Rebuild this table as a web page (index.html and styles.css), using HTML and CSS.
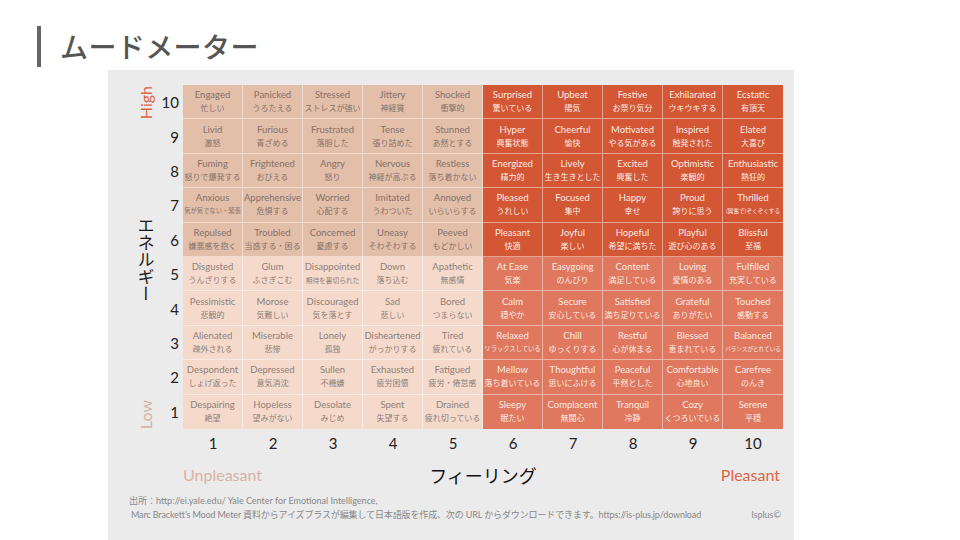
FILE: index.html
```html
<!DOCTYPE html>
<html lang="ja">
<head>
<meta charset="utf-8">
<title>ムードメーター</title>
<link rel="stylesheet" href="styles.css">
</head>
<body>
<header class="header">
  <div class="bar"></div>
  <h1 class="title">ムードメーター</h1>
</header>
<section class="panel">
  <div class="chart">
    <div class="axis-y">
      <span class="high">High</span>
      <span class="energy">エネルギー</span>
      <span class="low">Low</span>
    </div>

    <div class="rn">10</div>
    <div class="c q1"><span class="en">Engaged</span><span class="ja">忙しい</span></div>
    <div class="c q1"><span class="en">Panicked</span><span class="ja">うろたえる</span></div>
    <div class="c q1"><span class="en">Stressed</span><span class="ja">ストレスが強い</span></div>
    <div class="c q1"><span class="en">Jittery</span><span class="ja">神経質</span></div>
    <div class="c q1"><span class="en">Shocked</span><span class="ja">衝撃的</span></div>
    <div class="c q2"><span class="en">Surprised</span><span class="ja">驚いている</span></div>
    <div class="c q2"><span class="en">Upbeat</span><span class="ja">陽気</span></div>
    <div class="c q2"><span class="en">Festive</span><span class="ja">お祭り気分</span></div>
    <div class="c q2"><span class="en">Exhilarated</span><span class="ja">ウキウキする</span></div>
    <div class="c q2 last"><span class="en">Ecstatic</span><span class="ja">有頂天</span></div>

    <div class="rn">9</div>
    <div class="c q1"><span class="en">Livid</span><span class="ja">激怒</span></div>
    <div class="c q1"><span class="en">Furious</span><span class="ja">青ざめる</span></div>
    <div class="c q1"><span class="en">Frustrated</span><span class="ja">落胆した</span></div>
    <div class="c q1"><span class="en">Tense</span><span class="ja">張り詰めた</span></div>
    <div class="c q1"><span class="en">Stunned</span><span class="ja">あ然とする</span></div>
    <div class="c q2"><span class="en">Hyper</span><span class="ja">興奮状態</span></div>
    <div class="c q2"><span class="en">Cheerful</span><span class="ja">愉快</span></div>
    <div class="c q2"><span class="en">Motivated</span><span class="ja">やる気がある</span></div>
    <div class="c q2"><span class="en">Inspired</span><span class="ja">触発された</span></div>
    <div class="c q2 last"><span class="en">Elated</span><span class="ja">大喜び</span></div>

    <div class="rn">8</div>
    <div class="c q1"><span class="en">Fuming</span><span class="ja">怒りで爆発する</span></div>
    <div class="c q1"><span class="en">Frightened</span><span class="ja">おびえる</span></div>
    <div class="c q1"><span class="en">Angry</span><span class="ja">怒り</span></div>
    <div class="c q1"><span class="en">Nervous</span><span class="ja">神経が高ぶる</span></div>
    <div class="c q1"><span class="en">Restless</span><span class="ja">落ち着かない</span></div>
    <div class="c q2"><span class="en">Energized</span><span class="ja">精力的</span></div>
    <div class="c q2"><span class="en">Lively</span><span class="ja">生き生きとした</span></div>
    <div class="c q2"><span class="en">Excited</span><span class="ja">興奮した</span></div>
    <div class="c q2"><span class="en">Optimistic</span><span class="ja">楽観的</span></div>
    <div class="c q2 last"><span class="en">Enthusiastic</span><span class="ja">熱狂的</span></div>

    <div class="rn">7</div>
    <div class="c q1"><span class="en">Anxious</span><span class="ja j9">気が気でない・緊張</span></div>
    <div class="c q1"><span class="en">Apprehensive</span><span class="ja">危惧する</span></div>
    <div class="c q1"><span class="en">Worried</span><span class="ja">心配する</span></div>
    <div class="c q1"><span class="en">Imitated</span><span class="ja">うわついた</span></div>
    <div class="c q1"><span class="en">Annoyed</span><span class="ja">いらいらする</span></div>
    <div class="c q2"><span class="en">Pleased</span><span class="ja">うれしい</span></div>
    <div class="c q2"><span class="en">Focused</span><span class="ja">集中</span></div>
    <div class="c q2"><span class="en">Happy</span><span class="ja">幸せ</span></div>
    <div class="c q2"><span class="en">Proud</span><span class="ja">誇りに思う</span></div>
    <div class="c q2 last"><span class="en">Thrilled</span><span class="ja j10">(興奮で)ぞくぞくする</span></div>

    <div class="rn">6</div>
    <div class="c q1 mid"><span class="en">Repulsed</span><span class="ja">嫌悪感を抱く</span></div>
    <div class="c q1 mid"><span class="en">Troubled</span><span class="ja">当惑する・困る</span></div>
    <div class="c q1 mid"><span class="en">Concerned</span><span class="ja">憂慮する</span></div>
    <div class="c q1 mid"><span class="en">Uneasy</span><span class="ja">そわそわする</span></div>
    <div class="c q1 mid"><span class="en">Peeved</span><span class="ja">もどかしい</span></div>
    <div class="c q2 mid"><span class="en">Pleasant</span><span class="ja">快適</span></div>
    <div class="c q2 mid"><span class="en">Joyful</span><span class="ja">楽しい</span></div>
    <div class="c q2 mid"><span class="en">Hopeful</span><span class="ja">希望に満ちた</span></div>
    <div class="c q2 mid"><span class="en">Playful</span><span class="ja">遊び心のある</span></div>
    <div class="c q2 mid last"><span class="en">Blissful</span><span class="ja">至福</span></div>

    <div class="rn">5</div>
    <div class="c q3"><span class="en">Disgusted</span><span class="ja">うんざりする</span></div>
    <div class="c q3"><span class="en">Glum</span><span class="ja">ふさぎこむ</span></div>
    <div class="c q3"><span class="en">Disappointed</span><span class="ja j8">期待を裏切られた</span></div>
    <div class="c q3"><span class="en">Down</span><span class="ja">落ち込む</span></div>
    <div class="c q3"><span class="en">Apathetic</span><span class="ja">無感情</span></div>
    <div class="c q4"><span class="en">At Ease</span><span class="ja">気楽</span></div>
    <div class="c q4"><span class="en">Easygoing</span><span class="ja">のんびり</span></div>
    <div class="c q4"><span class="en">Content</span><span class="ja">満足している</span></div>
    <div class="c q4"><span class="en">Loving</span><span class="ja">愛情のある</span></div>
    <div class="c q4 last"><span class="en">Fulfilled</span><span class="ja">充実している</span></div>

    <div class="rn">4</div>
    <div class="c q3"><span class="en">Pessimistic</span><span class="ja">悲観的</span></div>
    <div class="c q3"><span class="en">Morose</span><span class="ja">気難しい</span></div>
    <div class="c q3"><span class="en">Discouraged</span><span class="ja">気を落とす</span></div>
    <div class="c q3"><span class="en">Sad</span><span class="ja">悲しい</span></div>
    <div class="c q3"><span class="en">Bored</span><span class="ja">つまらない</span></div>
    <div class="c q4"><span class="en">Calm</span><span class="ja">穏やか</span></div>
    <div class="c q4"><span class="en">Secure</span><span class="ja">安心している</span></div>
    <div class="c q4"><span class="en">Satisfied</span><span class="ja">満ち足りている</span></div>
    <div class="c q4"><span class="en">Grateful</span><span class="ja">ありがたい</span></div>
    <div class="c q4 last"><span class="en">Touched</span><span class="ja">感動する</span></div>

    <div class="rn">3</div>
    <div class="c q3"><span class="en">Alienated</span><span class="ja">疎外される</span></div>
    <div class="c q3"><span class="en">Miserable</span><span class="ja">悲惨</span></div>
    <div class="c q3"><span class="en">Lonely</span><span class="ja">孤独</span></div>
    <div class="c q3"><span class="en">Disheartened</span><span class="ja">がっかりする</span></div>
    <div class="c q3"><span class="en">Tired</span><span class="ja">疲れている</span></div>
    <div class="c q4"><span class="en">Relaxed</span><span class="ja j9">リラックスしている</span></div>
    <div class="c q4"><span class="en">Chill</span><span class="ja">ゆっくりする</span></div>
    <div class="c q4"><span class="en">Restful</span><span class="ja">心が休まる</span></div>
    <div class="c q4"><span class="en">Blessed</span><span class="ja">恵まれている</span></div>
    <div class="c q4 last"><span class="en">Balanced</span><span class="ja j10">バランスがとれている</span></div>

    <div class="rn">2</div>
    <div class="c q3"><span class="en">Despondent</span><span class="ja">しょげ返った</span></div>
    <div class="c q3"><span class="en">Depressed</span><span class="ja">意気消沈</span></div>
    <div class="c q3"><span class="en">Sullen</span><span class="ja">不機嫌</span></div>
    <div class="c q3"><span class="en">Exhausted</span><span class="ja">疲労困憊</span></div>
    <div class="c q3"><span class="en">Fatigued</span><span class="ja">疲労・倦怠感</span></div>
    <div class="c q4"><span class="en">Mellow</span><span class="ja">落ち着いている</span></div>
    <div class="c q4"><span class="en">Thoughtful</span><span class="ja">思いにふける</span></div>
    <div class="c q4"><span class="en">Peaceful</span><span class="ja">平然とした</span></div>
    <div class="c q4"><span class="en">Comfortable</span><span class="ja">心地良い</span></div>
    <div class="c q4 last"><span class="en">Carefree</span><span class="ja">のんき</span></div>

    <div class="rn">1</div>
    <div class="c q3 bottom"><span class="en">Despairing</span><span class="ja">絶望</span></div>
    <div class="c q3 bottom"><span class="en">Hopeless</span><span class="ja">望みがない</span></div>
    <div class="c q3 bottom"><span class="en">Desolate</span><span class="ja">みじめ</span></div>
    <div class="c q3 bottom"><span class="en">Spent</span><span class="ja">失望する</span></div>
    <div class="c q3 bottom"><span class="en">Drained</span><span class="ja">疲れ切っている</span></div>
    <div class="c q4 bottom"><span class="en">Sleepy</span><span class="ja">眠たい</span></div>
    <div class="c q4 bottom"><span class="en">Complacent</span><span class="ja">無関心</span></div>
    <div class="c q4 bottom"><span class="en">Tranquil</span><span class="ja">冷静</span></div>
    <div class="c q4 bottom"><span class="en">Cozy</span><span class="ja">くつろいでいる</span></div>
    <div class="c q4 bottom last"><span class="en">Serene</span><span class="ja">平穏</span></div>

    <div class="cn first">1</div>
    <div class="cn">2</div>
    <div class="cn">3</div>
    <div class="cn">4</div>
    <div class="cn">5</div>
    <div class="cn">6</div>
    <div class="cn">7</div>
    <div class="cn">8</div>
    <div class="cn">9</div>
    <div class="cn">10</div>
  </div>

  <div class="axis-x">
    <span class="unpleasant">Unpleasant</span>
    <span class="feeling">フィーリング</span>
    <span class="pleasant">Pleasant</span>
  </div>

  <footer class="source">
    <p class="line1">出所：http://ei.yale.edu/ Yale Center for Emotional Intelligence,</p>
    <p class="line2"><span class="tight">Marc Brackett’s Mood Meter 資料からアイズプラスが編集して日本語版を作成、次の URL からダウンロードできます。https://is-plus.jp/download</span><span class="brand">Isplus©</span></p>
  </footer>
</section>
</body>
</html>
```

FILE: styles.css
```css
html, body {
  margin: 0;
  padding: 0;
}

body {
  width: 960px;
  height: 540px;
  overflow: hidden;
  background: #ffffff;
  font-family: "Lato", "Noto Sans CJK JP", sans-serif;
}

.header {
  box-sizing: border-box;
  height: 70px;
  padding: 26px 0 0 37px;
  display: flex;
  align-items: flex-start;
}

.bar {
  width: 4px;
  height: 41px;
  background: #666666;
}

.title {
  margin: 0 0 0 19px;
  height: 41px;
  line-height: 41px;
  font-family: "Noto Sans CJK JP", sans-serif;
  font-weight: 500;
  font-size: 28px;
  color: #555555;
  letter-spacing: 0.4px;
}

.panel {
  box-sizing: border-box;
  margin-left: 108px;
  width: 686px;
  height: 470px;
  background: #ebebeb;
  padding-top: 15px;
}

.chart {
  display: grid;
  grid-template-columns: 56px 19px repeat(10, 60px);
  grid-template-rows: repeat(10, 34.4px) 29px;
}

.axis-y {
  grid-column: 1;
  grid-row: 1 / 11;
  box-sizing: border-box;
  padding-left: 20px;
  padding-top: 1px;
  display: flex;
  flex-direction: column;
  align-items: center;
  justify-content: space-between;
}

.high, .low {
  writing-mode: vertical-rl;
  transform: rotate(180deg);
  font-family: "Lato", sans-serif;
  font-size: 16px;
  line-height: 14px;
}

.high {
  color: #dc6446;
}

.low {
  color: #d6b2a3;
}

.energy {
  writing-mode: vertical-rl;
  font-family: "Noto Sans CJK JP", sans-serif;
  font-size: 17px;
  line-height: 17px;
  color: #1a1a1a;
}

.rn {
  grid-column: 2;
  box-sizing: border-box;
  padding-right: 4px;
  text-align: right;
  font-size: 15px;
  color: #222222;
  display: flex;
  align-items: center;
  justify-content: flex-end;
}

.cn {
  font-size: 15px;
  color: #222222;
  display: flex;
  align-items: center;
  justify-content: center;
}

.cn.first {
  grid-column: 3;
}

.c {
  box-sizing: border-box;
  border-right: 1px solid rgba(255, 255, 255, 0.45);
  border-bottom: 1px solid rgba(255, 255, 255, 0.45);
  display: flex;
  flex-direction: column;
  align-items: center;
  justify-content: center;
  overflow: hidden;
  white-space: nowrap;
}

.c.last {
  border-right: 0;
}

.c.bottom {
  border-bottom: 0;
}

.q1 {
  background: #e3bea9;
  color: #85726a;
}

.q2 {
  background: #d35735;
  color: #fbeae2;
}

.q3 {
  background: #f5dacc;
  color: #8e7f78;
}

.q4 {
  background: #df785e;
  color: #fbeae2;
}

.en {
  font-size: 9.5px;
  line-height: 12px;
}

.ja {
  font-family: "Noto Sans CJK JP", sans-serif;
  font-size: 8px;
  line-height: 12px;
  margin-top: 1px;
}

.ja.j8 {
  font-size: 6.7px;
}

.ja.j9 {
  font-size: 6.3px;
}

.ja.j10 {
  font-size: 5.6px;
}

.axis-x {
  margin-left: 75px;
  width: 600px;
  height: 34px;
  display: grid;
  grid-template-columns: 1fr auto 1fr;
  align-items: center;
}

.unpleasant {
  font-size: 16px;
  color: #d8b3a5;
  justify-self: start;
}

.feeling {
  font-family: "Noto Sans CJK JP", sans-serif;
  font-size: 18px;
  color: #111111;
}

.pleasant {
  font-size: 16px;
  color: #dd6548;
  justify-self: end;
  padding-right: 3px;
}

.source {
  padding: 2px 13px 0 21px;
  color: #888888;
  font-size: 9px;
}

.source p {
  margin: 0;
  line-height: 14px;
}

.line2 {
  padding-left: 2px;
  display: flex;
  justify-content: space-between;
}

.tight {
  letter-spacing: -0.13px;
}

.brand {
  color: #8a8a8a;
}
```
